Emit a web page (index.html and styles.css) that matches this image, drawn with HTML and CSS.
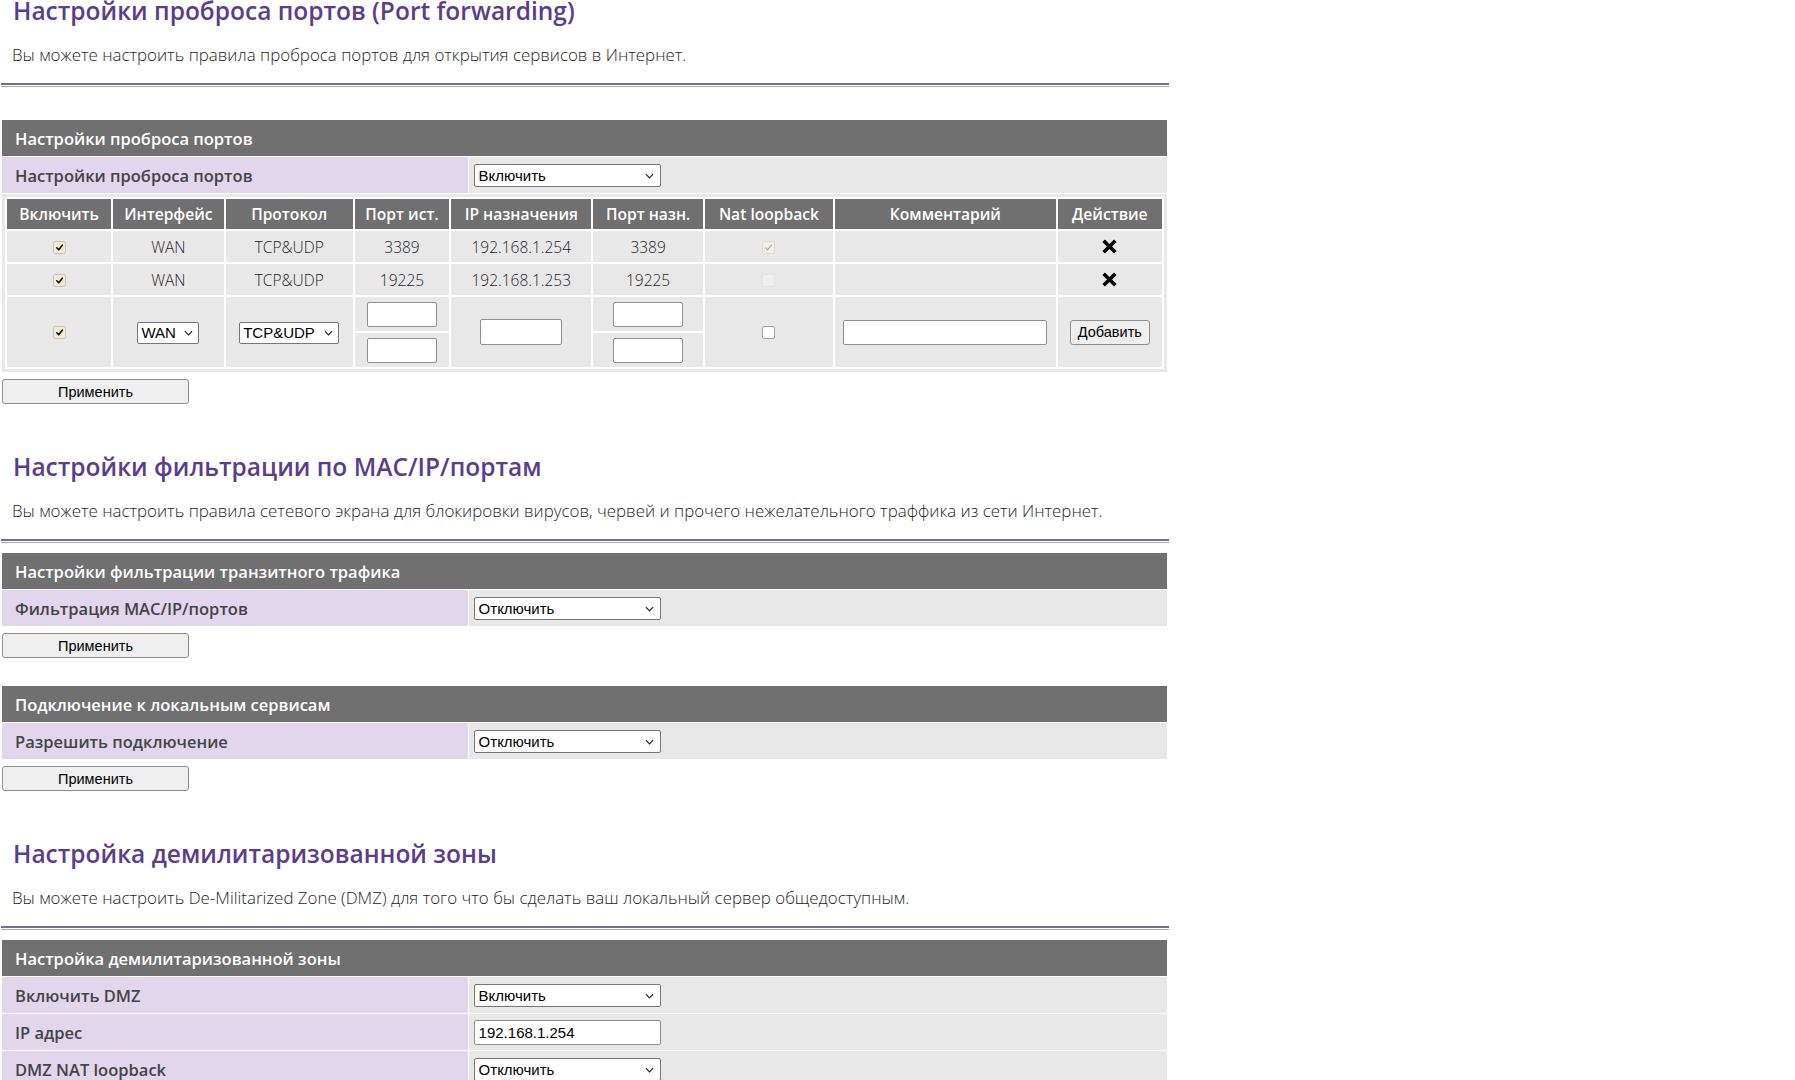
FILE: index.html
```html
<!DOCTYPE html>
<html lang="ru">
<head>
<meta charset="utf-8">
<title>Port forwarding</title>
<link rel="stylesheet" href="styles.css">
</head>
<body>
<div class="page">

  <h1 class="title title-first">Настройки проброса портов (Port forwarding)</h1>
  <p class="desc">Вы можете настроить правила проброса портов для открытия сервисов в Интернет.</p>
  <hr class="rule">

  <table class="form form-first">
    <tr><th colspan="2" class="head">Настройки проброса портов</th></tr>
    <tr>
      <td class="label">Настройки проброса портов</td>
      <td class="val"><span class="sel sel-wide"><select><option>Включить</option><option>Отключить</option></select><svg class="chev" viewBox="0 0 10 6"><path d="M1 1 L5 5 L9 1"/></svg></span></td>
    </tr>
    <tr>
      <td colspan="2" class="rules-cell">
        <table class="rules">
          <tr>
            <th>Включить</th><th>Интерфейс</th><th>Протокол</th><th>Порт ист.</th><th>IP назначения</th><th>Порт назн.</th><th>Nat loopback</th><th>Комментарий</th><th>Действие</th>
          </tr>
          <tr>
            <td><span class="cb cb-on"><svg viewBox="0 0 13 13"><path d="M3.2 6.8 L5.6 9.2 L9.8 3.8"/></svg></span></td>
            <td>WAN</td><td>TCP&amp;UDP</td><td>3389</td><td>192.168.1.254</td><td>3389</td>
            <td><span class="cb cb-dis-on"><svg viewBox="0 0 13 13"><path d="M3.2 6.8 L5.6 9.2 L9.8 3.8"/></svg></span></td>
            <td></td>
            <td><svg class="del" viewBox="0 0 16 14"><path d="M2.5 1.5 L13.5 12.5 M13.5 1.5 L2.5 12.5"/></svg></td>
          </tr>
          <tr>
            <td><span class="cb cb-on"><svg viewBox="0 0 13 13"><path d="M3.2 6.8 L5.6 9.2 L9.8 3.8"/></svg></span></td>
            <td>WAN</td><td>TCP&amp;UDP</td><td>19225</td><td>192.168.1.253</td><td>19225</td>
            <td><span class="cb cb-dis"></span></td>
            <td></td>
            <td><svg class="del" viewBox="0 0 16 14"><path d="M2.5 1.5 L13.5 12.5 M13.5 1.5 L2.5 12.5"/></svg></td>
          </tr>
          <tr class="add-row">
            <td><span class="cb cb-on"><svg viewBox="0 0 13 13"><path d="M3.2 6.8 L5.6 9.2 L9.8 3.8"/></svg></span></td>
            <td><span class="sel sel-wan"><select><option>WAN</option></select><svg class="chev" viewBox="0 0 10 6"><path d="M1 1 L5 5 L9 1"/></svg></span></td>
            <td><span class="sel sel-proto"><select><option>TCP&amp;UDP</option></select><svg class="chev" viewBox="0 0 10 6"><path d="M1 1 L5 5 L9 1"/></svg></span></td>
            <td class="split-cell"><div class="split"><div class="split-part"><input class="txt txt-port" type="text"></div><div class="split-part"><input class="txt txt-port" type="text"></div></div></td>
            <td><input class="txt txt-ip" type="text"></td>
            <td class="split-cell"><div class="split"><div class="split-part"><input class="txt txt-port" type="text"></div><div class="split-part"><input class="txt txt-port" type="text"></div></div></td>
            <td><span class="cb cb-off"></span></td>
            <td><input class="txt txt-comment" type="text"></td>
            <td><button class="btn btn-add" type="button">Добавить</button></td>
          </tr>
        </table>
      </td>
    </tr>
  </table>
  <button class="btn btn-apply" type="button">Применить</button>

  <h1 class="title">Настройки фильтрации по MAC/IP/портам</h1>
  <p class="desc">Вы можете настроить правила сетевого экрана для блокировки вирусов, червей и прочего нежелательного траффика из сети Интернет.</p>
  <hr class="rule">

  <table class="form">
    <tr><th colspan="2" class="head">Настройки фильтрации транзитного трафика</th></tr>
    <tr>
      <td class="label">Фильтрация MAC/IP/портов</td>
      <td class="val"><span class="sel sel-wide"><select><option>Отключить</option><option>Включить</option></select><svg class="chev" viewBox="0 0 10 6"><path d="M1 1 L5 5 L9 1"/></svg></span></td>
    </tr>
  </table>
  <button class="btn btn-apply" type="button">Применить</button>

  <table class="form form-gap">
    <tr><th colspan="2" class="head">Подключение к локальным сервисам</th></tr>
    <tr>
      <td class="label">Разрешить подключение</td>
      <td class="val"><span class="sel sel-wide"><select><option>Отключить</option><option>Включить</option></select><svg class="chev" viewBox="0 0 10 6"><path d="M1 1 L5 5 L9 1"/></svg></span></td>
    </tr>
  </table>
  <button class="btn btn-apply" type="button">Применить</button>

  <h1 class="title">Настройка демилитаризованной зоны</h1>
  <p class="desc">Вы можете настроить De-Militarized Zone (DMZ) для того что бы сделать ваш локальный сервер общедоступным.</p>
  <hr class="rule">

  <table class="form">
    <tr><th colspan="2" class="head">Настройка демилитаризованной зоны</th></tr>
    <tr>
      <td class="label">Включить DMZ</td>
      <td class="val"><span class="sel sel-wide"><select><option>Включить</option><option>Отключить</option></select><svg class="chev" viewBox="0 0 10 6"><path d="M1 1 L5 5 L9 1"/></svg></span></td>
    </tr>
    <tr>
      <td class="label">IP адрес</td>
      <td class="val"><input class="txt txt-wide" type="text" value="192.168.1.254"></td>
    </tr>
    <tr>
      <td class="label">DMZ NAT loopback</td>
      <td class="val"><span class="sel sel-wide"><select><option>Отключить</option><option>Включить</option></select><svg class="chev" viewBox="0 0 10 6"><path d="M1 1 L5 5 L9 1"/></svg></span></td>
    </tr>
  </table>

</div>
</body>
</html>
```

FILE: styles.css
```css
* {
  box-sizing: border-box;
}

html, body {
  margin: 0;
  padding: 0;
  background: #ffffff;
}

body {
  font-family: "Open Sans", "Noto Sans", sans-serif;
  color: #333333;
}

.page {
  width: 1168px;
  margin-left: 1px;
  display: flow-root;
}

.title {
  margin: 48px 0 0;
  padding-left: 12px;
  font-size: 24.5px;
  line-height: 30px;
  font-weight: 600;
  color: #5a3d8b;
}

.title-first {
  margin-top: -4px;
}

.desc {
  margin: 18px 0 0;
  padding-left: 11px;
  font-size: 16.9px;
  line-height: 22px;
  font-weight: 300;
  color: #1e1e1e;
}

.rule {
  display: block;
  margin: 17px 0 0;
  height: 4px;
  border: 0;
  border-top: 2px solid #766f88;
  border-bottom: 1px solid #aba7b4;
  background: #ffffff;
}

.form {
  width: 1167px;
  border-collapse: separate;
  border-spacing: 1px;
  margin-top: 9px;
}

.form-first {
  margin-top: 32px;
}

.form-gap {
  margin-top: 27px;
}

.head {
  height: 36px;
  padding: 0 13px;
  background: #707070;
  color: #ffffff;
  text-align: left;
  font-size: 16.5px;
  font-weight: 600;
}

.label {
  width: 40%;
  height: 36px;
  padding: 0 13px;
  background: #e1d6ec;
  color: #444444;
  font-size: 16.5px;
  font-weight: 600;
}

.val {
  padding: 0 5px;
  background: #e8e8e8;
}

.rules-cell {
  padding: 3px;
  background: #e8e8e8;
}

.rules {
  width: 100%;
  table-layout: fixed;
  border-collapse: separate;
  border-spacing: 2px;
  background: #ffffff;
}

.rules th {
  height: 30px;
  padding: 0 2px;
  background: #707070;
  color: #ffffff;
  font-size: 15.6px;
  font-weight: 600;
  text-align: center;
  white-space: nowrap;
}

.rules th:nth-child(1) { width: 104px; }
.rules th:nth-child(2) { width: 110px; }
.rules th:nth-child(3) { width: 127px; }
.rules th:nth-child(4) { width: 94px; }
.rules th:nth-child(5) { width: 140px; }
.rules th:nth-child(6) { width: 109px; }
.rules th:nth-child(7) { width: 128px; }
.rules th:nth-child(8) { width: 220px; }
.rules th:nth-child(9) { width: 104px; }

.rules td {
  height: 31px;
  padding: 0;
  background: #e8e8e8;
  text-align: center;
  vertical-align: middle;
  font-size: 15.5px;
  font-weight: 300;
  color: #1e1e1e;
}

.rules .add-row td {
  height: 70px;
}

.rules td.split-cell {
  padding: 0;
  background: #ffffff;
}

.split {
  display: flex;
  flex-direction: column;
  gap: 2px;
  height: 70px;
}

.split-part {
  flex: 1;
  display: flex;
  align-items: center;
  justify-content: center;
  background: #e8e8e8;
}

/* checkboxes */
.cb {
  display: inline-block;
  width: 13px;
  height: 13px;
  border-radius: 2px;
  vertical-align: middle;
  position: relative;
  top: -1px;
}

.cb svg {
  display: block;
  width: 11px;
  height: 11px;
  fill: none;
  stroke-linecap: round;
  stroke-linejoin: round;
}

.cb-on {
  background: #f3ead5;
  border: 1px solid #cfc4aa;
}

.cb-on svg {
  stroke: #111111;
  stroke-width: 1.9;
}

.cb-dis-on {
  background: #f4eee2;
  border: 1px solid #e1d9c9;
}

.cb-dis-on svg {
  stroke: #9b9b9b;
  stroke-width: 1.2;
}

.cb-dis {
  background: #efefef;
  border: 1px solid #e3e3e3;
}

.cb-off {
  background: #ffffff;
  border: 1px solid #a3a3a3;
}

/* delete icon */
.del {
  display: inline-block;
  width: 17px;
  height: 15px;
  vertical-align: middle;
  fill: none;
  stroke: #000000;
  stroke-width: 3.4;
  position: relative;
  top: -2px;
}

/* selects */
.sel {
  position: relative;
  display: inline-block;
  vertical-align: middle;
}

.sel select {
  appearance: none;
  -webkit-appearance: none;
  display: block;
  height: 23px;
  margin: 0;
  padding: 0 4px;
  border: 1px solid #767676;
  border-radius: 2px;
  background: #ffffff;
  color: #000000;
  font-family: "Liberation Sans", Arial, sans-serif;
  font-size: 15px;
}

.sel .chev {
  position: absolute;
  top: 9px;
  width: 9px;
  height: 6px;
  fill: none;
  stroke: #222222;
  stroke-width: 1.3;
  pointer-events: none;
}

.sel-wide select {
  width: 187px;
}

.sel-wide .chev {
  right: 7px;
}

.sel-wan select {
  width: 62px;
  height: 22px;
  font-size: 15px;
  padding: 0 3px;
}

.sel-wan .chev {
  right: 6px;
  top: 8px;
}

.sel-proto select {
  width: 100px;
  height: 22px;
  font-size: 15px;
  padding: 0 3px;
}

.sel-proto .chev {
  right: 6px;
  top: 8px;
}

/* text inputs */
.txt {
  display: inline-block;
  margin: 0;
  padding: 0 4px;
  border: 1px solid #8f8f8f;
  border-radius: 2px;
  background: #ffffff;
  color: #000000;
  font-family: "Liberation Sans", Arial, sans-serif;
  font-size: 15px;
  vertical-align: middle;
}

.txt-port {
  width: 70px;
  height: 25px;
}

.txt-ip {
  width: 82px;
  height: 26px;
}

.txt-comment {
  width: 204px;
  height: 25px;
}

.txt-wide {
  width: 187px;
  height: 25px;
}

/* buttons */
.btn {
  margin: 0;
  border: 1px solid #8d8d8d;
  border-radius: 3px;
  background: #efefef;
  color: #000000;
  font-family: "Liberation Sans", Arial, sans-serif;
  font-size: 14.5px;
  padding: 0;
}

.btn-add {
  width: 80px;
  height: 25px;
}

.btn-apply {
  display: block;
  width: 187px;
  height: 25px;
  margin-top: 6px;
  margin-left: 1px;
}
```
